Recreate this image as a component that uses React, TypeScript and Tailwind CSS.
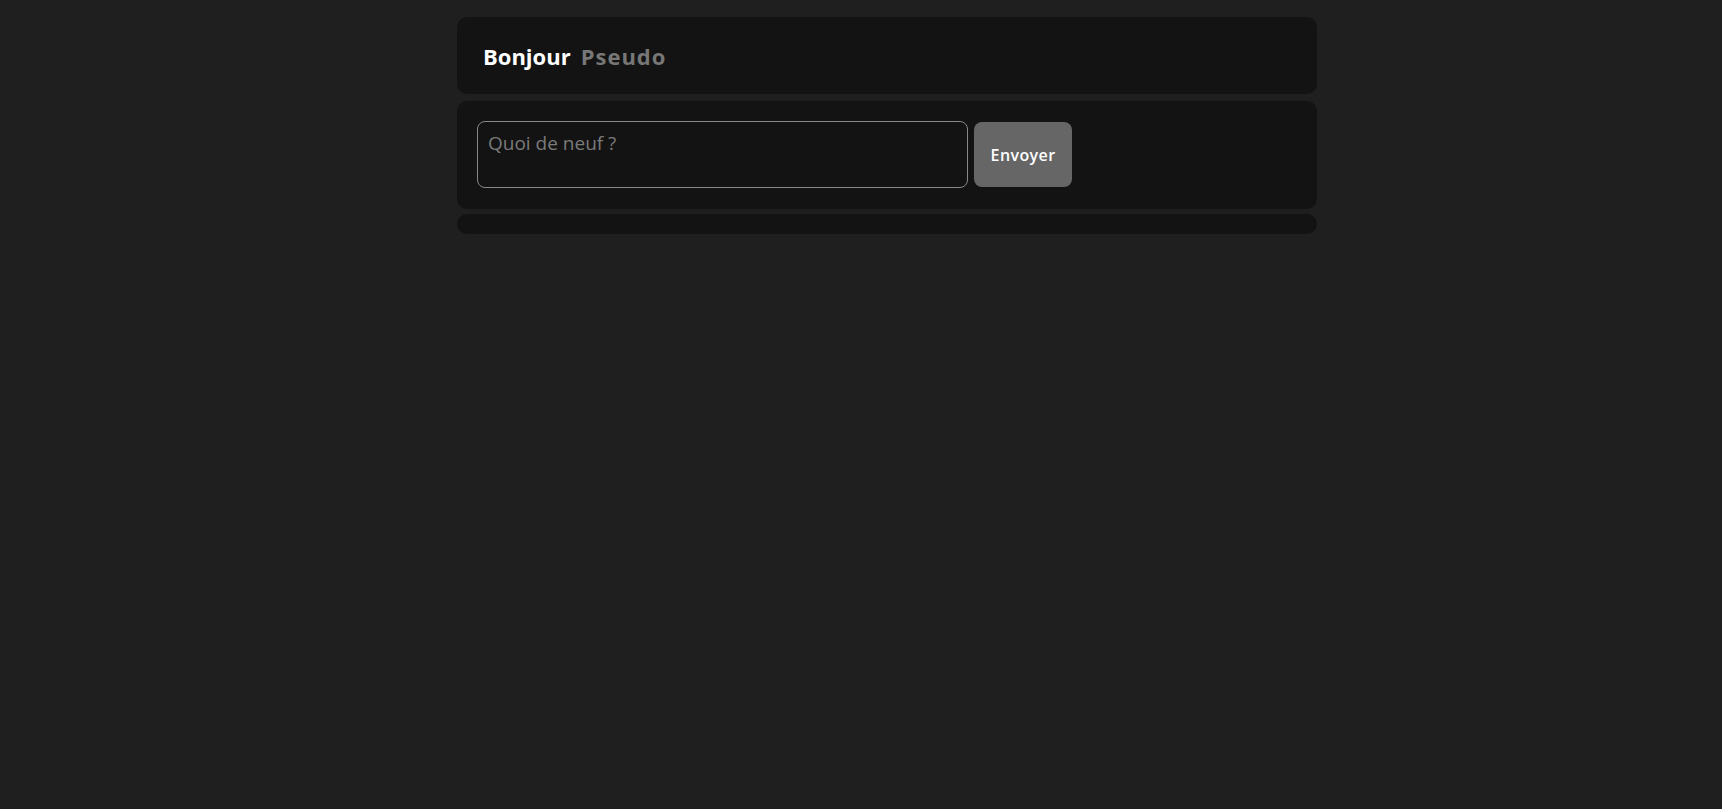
const App = () => {
  return (
    <div
      className="min-h-screen w-full bg-[#1f1f1f] pt-[17px] pl-[52px] flex justify-center"
      style={{ fontFamily: '"Open Sans", "DejaVu Sans", sans-serif' }}
    >
      <div className="w-[860px] flex flex-col">
        <header className="h-[77px] bg-[#131313] rounded-[10px] flex items-center px-[26px] pt-[2px]">
          <h1 className="text-[22px] font-bold text-white">
            Bonjour
            <span className="ml-[10px] tracking-[1px] text-[#777]">Pseudo</span>
          </h1>
        </header>

        <form
          className="mt-[7px] bg-[#131313] rounded-[10px] pt-[20px] pb-[21px] px-[20px] flex items-center gap-[6px]"
          onSubmit={(e) => e.preventDefault()}
        >
          <textarea
            placeholder="Quoi de neuf ?"
            className="w-[491px] h-[67px] resize-none rounded-[8px] border border-[#888] bg-[#131313] px-[10px] pt-[7px] pb-[4px] text-[19px] text-white placeholder:text-[#7a7a7a] outline-none"
          />
          <button
            type="submit"
            className="w-[98px] h-[65px] rounded-[8px] bg-[#666] text-[16px] tracking-[0.4px] font-semibold text-white"
          >
            Envoyer
          </button>
        </form>

        <div className="mt-[5px] h-[20px] bg-[#131313] rounded-[10px]" />
      </div>
    </div>
  );
};

export default App;
